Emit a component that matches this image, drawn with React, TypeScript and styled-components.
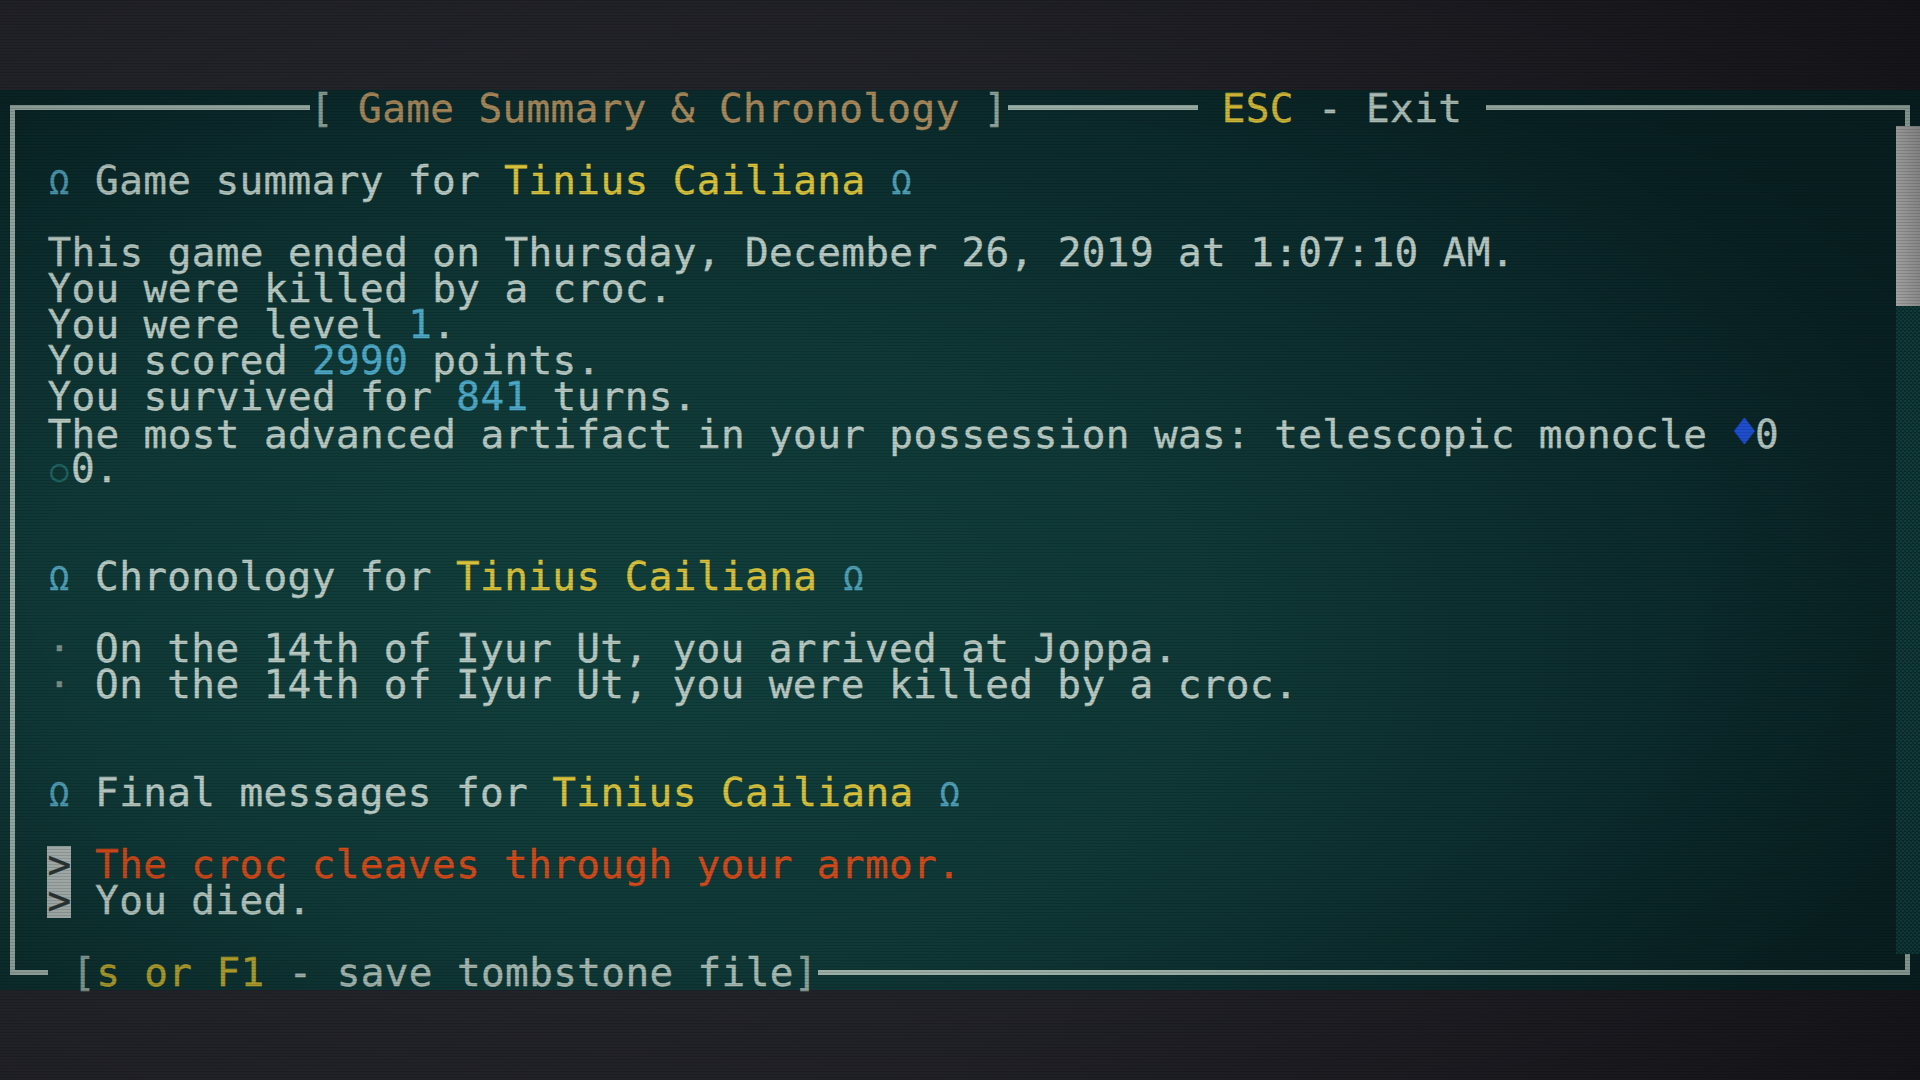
import React from "react";
import styled, { createGlobalStyle } from "styled-components";

const CW = 23.7;
const ROW = 36;
const LINE = "#9cb0a8";

const Global = createGlobalStyle`
  html, body {
    margin: 0;
    padding: 0;
    background: #1f2027;
    overflow: hidden;
  }
`;

const Screen = styled.div`
  position: relative;
  width: 1920px;
  height: 1080px;
  display: flex;
  flex-direction: column;
  background: linear-gradient(90deg, #26262e 0%, #222229 50%, #1a1a1f 100%);
  font-family: "DejaVu Sans Mono", "Liberation Mono", monospace;
  font-size: 39.37px;
  letter-spacing: 0.36px;
  -webkit-text-stroke-width: 0.4px;
  color: #b8c9c2;
  overflow: hidden;
`;

const Band = styled.div`
  flex: none;
  height: 90px;
`;

const Panel = styled.div`
  flex: none;
  height: 900px;
  display: flex;
  flex-direction: column;
  background:
    radial-gradient(ellipse 70% 80% at 32% 62%, #11403d 0%, #0f3836 45%, #0b2b2c 78%, #092325 100%);
`;

const BorderRow = styled.div`
  flex: none;
  height: ${ROW}px;
  display: flex;
  align-items: flex-start;
  line-height: ${ROW}px;
  white-space: pre;
`;

type CornerPos = "tl" | "tr" | "bl" | "br";

const Corner = styled.div<{ $pos: CornerPos; $w?: number }>`
  flex: ${(p) => (p.$w ? `0 0 ${p.$w}px` : "1 1 auto")};
  box-sizing: border-box;
  height: 21px;
  margin-top: ${(p) => (p.$pos[0] === "t" ? "15px" : "0")};
  margin-left: ${(p) => (p.$pos[1] === "l" ? "10px" : "0")};
  margin-right: ${(p) => (p.$pos[1] === "r" ? "10px" : "0")};
  border-${(p) => (p.$pos[0] === "t" ? "top" : "bottom")}: 5px solid ${LINE};
  border-${(p) => (p.$pos[1] === "l" ? "left" : "right")}: 5px solid ${LINE};
`;

const Segment = styled.div<{ $w: number }>`
  flex: 0 0 ${(p) => p.$w}px;
  height: 5px;
  margin-top: 15px;
  background: ${LINE};
`;

const Ink = styled.span<{ $c: string }>`
  color: ${(p) => p.$c};
`;

const Body = styled.div`
  flex: 1;
  min-height: 0;
  display: flex;
`;

const Rail = styled.div`
  flex: 0 0 ${CW}px;
  background: linear-gradient(
    90deg,
    transparent 10px,
    ${LINE} 10px,
    ${LINE} 15px,
    transparent 15px
  );
`;

const Content = styled.div`
  flex: 1;
  min-width: 0;
  padding: ${ROW}px 0 0 ${CW}px;
  display: flex;
  flex-direction: column;
  gap: ${ROW * 2}px;
  white-space: pre;
  line-height: ${ROW}px;
`;

const Scroll = styled.div`
  flex: 0 0 24px;
  display: flex;
  flex-direction: column;
`;

const Thumb = styled.div`
  flex: 0 0 180px;
  background: linear-gradient(90deg, #b4b4b4 0%, #a3a3a3 60%, #999 100%);
`;

const Track = styled.div`
  flex: 1;
  background-color: #0c3131;
  background-image: conic-gradient(
    #134141 25%,
    transparent 0 50%,
    #134141 0 75%,
    transparent 0
  );
  background-size: 4px 4px;
`;

const Section = styled.section`
  display: flex;
  flex-direction: column;
  gap: ${ROW}px;
`;

const Line = styled.div<{ $c?: string }>`
  height: ${ROW}px;
  color: ${(p) => p.$c || "inherit"};
`;

const Lines = styled.div`
  display: flex;
  flex-direction: column;
`;

const Cell = styled.span<{ $c: string; $size?: number; $lift?: number; $align?: string }>`
  display: inline-block;
  width: ${CW}px;
  letter-spacing: 0;
  text-align: ${(p) => p.$align || "center"};
  color: ${(p) => p.$c};
  font-size: ${(p) => (p.$size ? `${p.$size}px` : "inherit")};
  vertical-align: ${(p) => (p.$lift ? `${p.$lift}px` : "baseline")};
`;

const Marker = styled.span`
  display: inline-block;
  width: ${CW}px;
  height: ${ROW}px;
  vertical-align: top;
  text-align: center;
  letter-spacing: 0;
  background: #a9b3b0;
  color: #2b3636;
`;

const Name = styled.span`
  color: #d8c13b;
  letter-spacing: 0.4px;
`;

const Num = styled.span`
  color: #4da8c6;
`;

const Scanlines = styled.div`
  position: absolute;
  inset: 0;
  pointer-events: none;
  background:
    repeating-linear-gradient(
      to bottom,
      rgba(0, 0, 0, 0.13) 0px,
      rgba(0, 0, 0, 0.13) 1px,
      transparent 1px,
      transparent 3px
    ),
    radial-gradient(ellipse at 45% 50%, transparent 55%, rgba(0, 0, 0, 0.22) 100%);
`;

const Omega = () => (
  <Cell $c="#4f9fb6" $size={33}>
    Ω
  </Cell>
);

const Heading: React.FC<{ label: string; name: string }> = ({ label, name }) => (
  <Line>
    <Omega />
    {" " + label + " "}
    <Name>{name}</Name> <Omega />
  </Line>
);

const NAME = "Tinius Cailiana";

export default function App() {
  return (
    <Screen>
      <Global />
      <Band />
      <Panel>
        <BorderRow>
          <Corner $pos="tl" $w={300} />
          <span>
            <Ink $c="#8fa39b">[</Ink>
            <Ink $c="#a98a5c"> Game Summary &amp; Chronology </Ink>
            <Ink $c="#8fa39b">]</Ink>
          </span>
          <Segment $w={190} />
          <span>
            {" "}
            <Ink $c="#d2ba37">ESC</Ink>
            <Ink $c="#b3c5bd">{" - Exit "}</Ink>
          </span>
          <Corner $pos="tr" />
        </BorderRow>

        <Body>
          <Rail />
          <Content>
            <Section>
              <Heading label="Game summary for" name={NAME} />
              <Lines>
                <Line>This game ended on Thursday, December 26, 2019 at 1:07:10 AM.</Line>
                <Line>You were killed by a croc.</Line>
                <Line>
                  You were level <Num>1</Num>.
                </Line>
                <Line>
                  You scored <Num>2990</Num> points.
                </Line>
                <Line>
                  You survived for <Num>841</Num> turns.
                </Line>
                <Line>
                  The most advanced artifact in your possession was: telescopic monocle{" "}
                  <Cell $c="#1f50d2" $size={44} $lift={1} $align="left">
                    ♦
                  </Cell>
                  0
                </Line>
                <Line>
                  <Cell $c="#1f6463" $size={30} $lift={1}>
                    ○
                  </Cell>
                  0.
                </Line>
              </Lines>
            </Section>

            <Section>
              <Heading label="Chronology for" name={NAME} />
              <Lines>
                <Line>
                  <Cell $c="#7b8d87">·</Cell> On the 14th of Iyur Ut, you arrived at Joppa.
                </Line>
                <Line>
                  <Cell $c="#7b8d87">·</Cell> On the 14th of Iyur Ut, you were killed by a croc.
                </Line>
              </Lines>
            </Section>

            <Section>
              <Heading label="Final messages for" name={NAME} />
              <Lines>
                <Line $c="#d24a1a">
                  <Marker>&gt;</Marker> The croc cleaves through your armor.
                </Line>
                <Line>
                  <Marker>&gt;</Marker> You died.
                </Line>
              </Lines>
            </Section>
          </Content>
          <Scroll>
            <Thumb />
            <Track />
          </Scroll>
        </Body>

        <BorderRow>
          <Corner $pos="bl" $w={38} />
          <span>
            {" "}
            <Ink $c="#8fa39b">[</Ink>
            <Ink $c="#b7a62f">s or F1</Ink>
            <Ink $c="#a9bcb4">{" - save tombstone file"}</Ink>
            <Ink $c="#8fa39b">]</Ink>
          </span>
          <Corner $pos="br" />
        </BorderRow>
      </Panel>
      <Band />
      <Scanlines />
    </Screen>
  );
}
